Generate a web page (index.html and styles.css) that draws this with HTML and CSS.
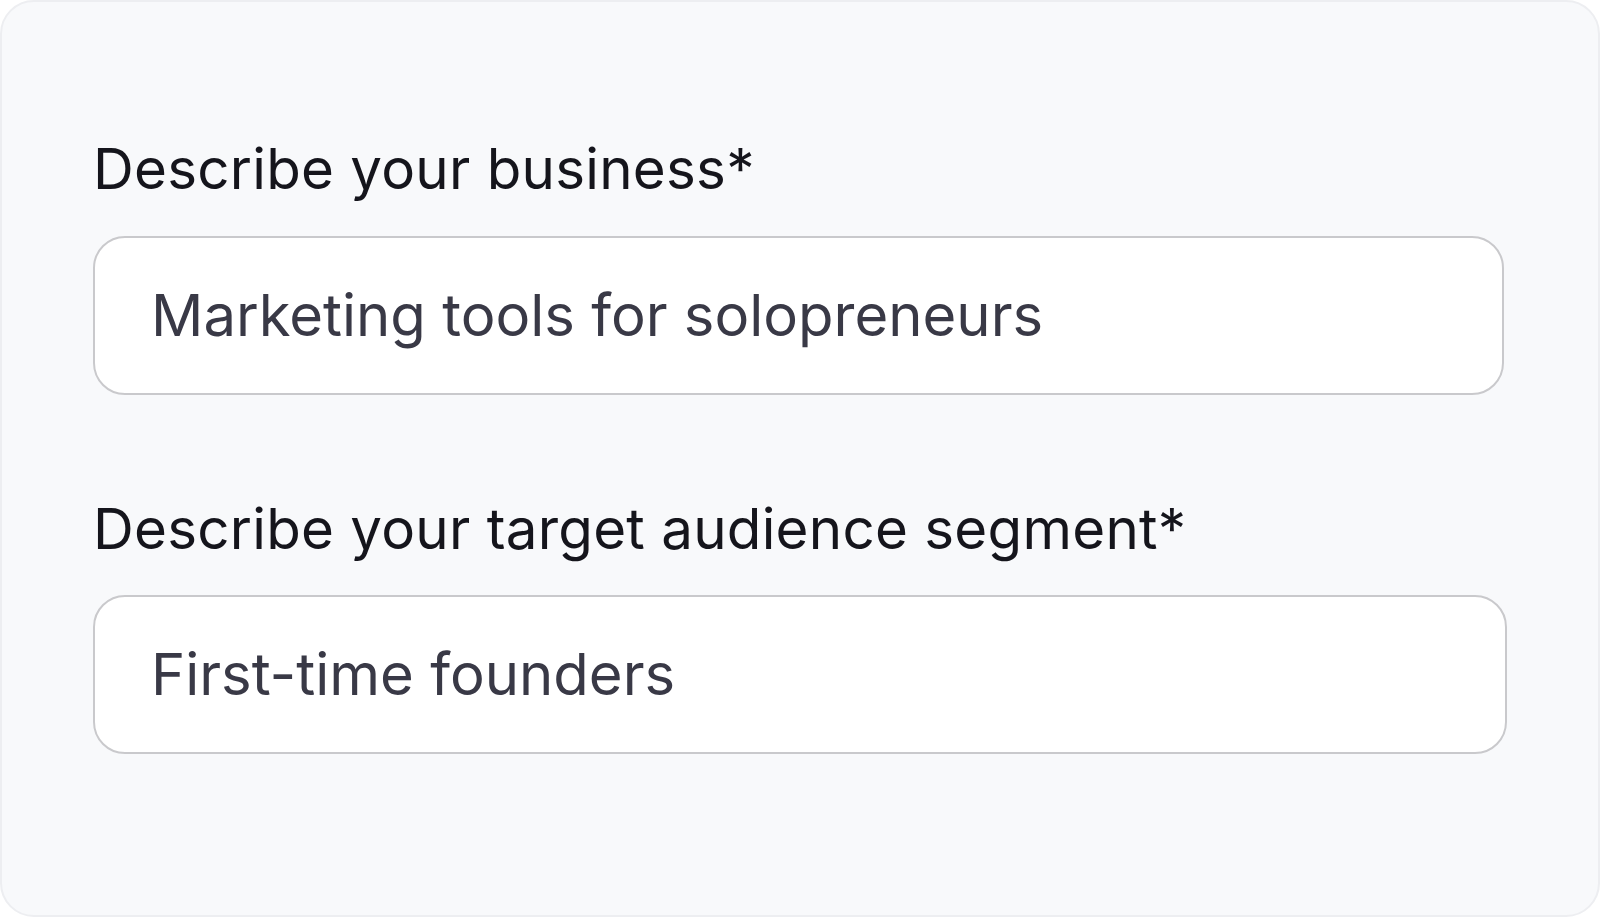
FILE: index.html
```html
<!DOCTYPE html>
<html lang="en">
<head>
<meta charset="utf-8">
<title>Form</title>
<link rel="stylesheet" href="styles.css">
</head>
<body>
<div class="card">
  <div class="field">
    <label class="label">Describe your business*</label>
    <div class="input">Marketing tools for solopreneurs</div>
  </div>
  <div class="field field-second">
    <label class="label">Describe your target audience segment*</label>
    <div class="input input-wide">First-time founders</div>
  </div>
</div>
</body>
</html>
```
FILE: styles.css
```css
* { box-sizing: border-box; }
html, body { margin: 0; padding: 0; background: #ffffff; }
body { font-family: "Inter", "Noto Sans", sans-serif; }

.card {
  width: 1600px;
  height: 917px;
  background: #f8f9fb;
  border: 2px solid #edeef1;
  border-radius: 34px;
  padding: 133px 94px 0 91px;
  display: flex;
  flex-direction: column;
}

.field {
  display: flex;
  flex-direction: column;
}
.field-second { margin-top: 100px; }

.label {
  font-size: 56.5px;
  line-height: 68px;
  color: #15151c;
  font-weight: 400;
  letter-spacing: 0.25px;
  margin-bottom: 33px;
}
.field-second .label { margin-bottom: 32px; }

.input {
  height: 159px;
  background: #ffffff;
  border: 2.5px solid #c9c9cc;
  border-radius: 32px;
  padding: 0 56px;
  font-size: 58px;
  line-height: 154px;
  color: #393946;
  white-space: nowrap;
}
.input-wide { margin-right: -3px; }
```
